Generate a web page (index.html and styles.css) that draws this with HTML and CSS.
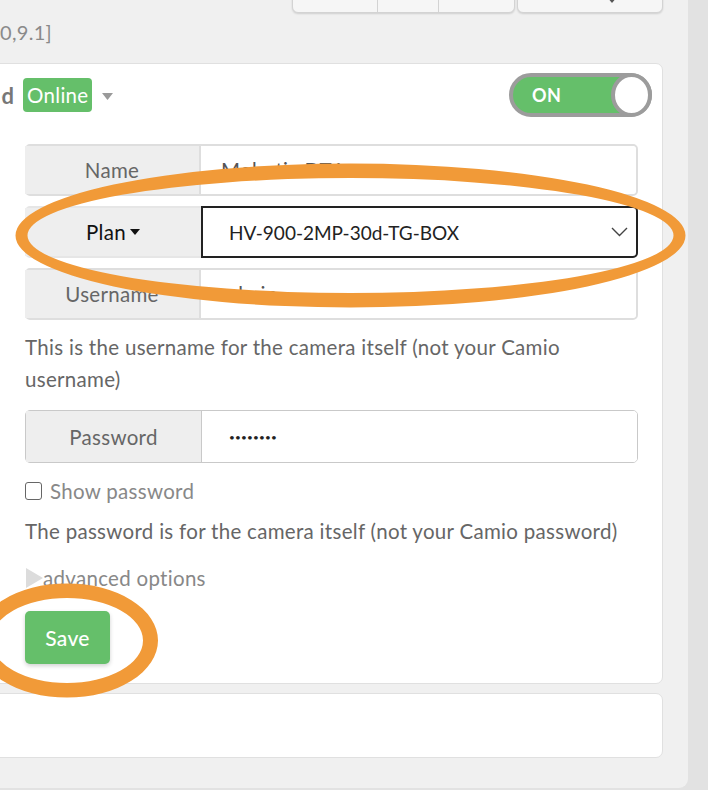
FILE: index.html
```html
<!DOCTYPE html>
<html lang="en">
<head>
<meta charset="utf-8">
<title>Camera settings</title>
<link rel="stylesheet" href="styles.css">
</head>
<body>
<div class="panel">
  <div class="toolbar">
    <div class="btn-group">
      <span class="seg seg-1"></span>
      <span class="seg seg-2"></span>
      <span class="seg seg-3"></span>
    </div>
    <div class="btn-menu">
      <svg class="menu-caret" width="10" height="6" viewBox="0 0 10 6"><path d="M0 0h10L5 6z" fill="#555"/></svg>
    </div>
  </div>

  <div class="version"><span>[1.0,9.1]</span></div>

  <div class="card card-main">
    <div class="card-head">
      <div class="title-clip"><span class="title">Mobotix DT1 Hardwired</span></div>
      <span class="badge">Online</span>
      <svg class="status-caret" width="11" height="7" viewBox="0 0 11 7"><path d="M0 0h11L5.5 7z" fill="#9a9a9a"/></svg>
      <div class="toggle">
        <span class="toggle-label">ON</span>
        <span class="toggle-knob"></span>
      </div>
    </div>

    <div class="form">
      <div class="group">
        <div class="group-label">Name</div>
        <div class="group-field"><span class="value">Mobotix DT1</span></div>
      </div>
      <div class="group group-plan">
        <div class="group-label label-plan">Plan <svg width="10" height="6" viewBox="0 0 10 6"><path d="M0 0h10L5 6z" fill="#111"/></svg></div>
        <div class="group-field field-select">
          <span class="select-text">HV-900-2MP-30d-TG-BOX</span>
          <svg class="chevron" width="17" height="10" viewBox="0 0 17 10"><path d="M1 1l7.5 7.5L16 1" fill="none" stroke="#444" stroke-width="1.4"/></svg>
        </div>
      </div>
      <div class="group">
        <div class="group-label">Username</div>
        <div class="group-field"><span class="value">admin</span></div>
      </div>

      <p class="help help-user">This is the username for the camera itself (not your Camio username)</p>

      <div class="group group-pass">
        <div class="group-label">Password</div>
        <div class="group-field"><span class="dots">••••••••</span></div>
      </div>

      <label class="check"><span class="box"></span>Show password</label>

      <p class="help help-pass">The password is for the camera itself (not your Camio password)</p>

      <div class="advanced"><svg class="adv-tri" width="17" height="20" viewBox="0 0 17 20"><path d="M0 0L17 10L0 20z" fill="#dcdcdc"/></svg><span>advanced options</span></div>

      <button class="save" type="button">Save</button>
    </div>
  </div>

  <div class="card card-empty"></div>
</div>

<svg class="marks" width="708" height="790" viewBox="0 0 708 790">
  <path fill="#f19a38" fill-rule="evenodd" d="M15.5 235.5a335 72 0 1 0 670 0a335 72 0 1 0 -670 0Z M27.5 235.5a323 57.5 0 1 0 646 0a323 57.5 0 1 0 -646 0Z"/>
  <path fill="#f19a38" fill-rule="evenodd" d="M-24 640.5a91 57 0 1 0 182 0a91 57 0 1 0 -182 0Z M-9 640.5a76 42.5 0 1 0 152 0a76 42.5 0 1 0 -152 0Z"/>
</svg>
</body>
</html>
```

FILE: styles.css
```css
* { box-sizing: border-box; }

html, body {
  margin: 0;
  padding: 0;
  width: 708px;
  height: 790px;
  overflow: hidden;
  background: #e2e2e2;
  font-family: Lato, "Liberation Sans", sans-serif;
  letter-spacing: 0.3px;
}

.panel {
  width: 688px;
  height: 788px;
  background: #f0f0f0;
  border-bottom-right-radius: 9px;
  padding-right: 25px;
  overflow: hidden;
}

/* top toolbar (mostly scrolled out of view) */
.toolbar {
  display: flex;
  justify-content: flex-end;
  gap: 2px;
  margin-top: -22px;
  height: 35px;
}
.btn-group {
  display: flex;
  width: 223px;
  height: 35px;
  border: 1px solid #d3d3d3;
  border-radius: 6px;
  background: #f6f6f6;
  box-shadow: 0 1px 2px rgba(0,0,0,0.14);
  overflow: hidden;
}
.seg { height: 100%; }
.seg-1 { width: 85px; border-right: 1px solid #d3d3d3; }
.seg-2 { width: 61px; border-right: 1px solid #d3d3d3; }
.seg-3 { flex: 1; }
.btn-menu {
  width: 146px;
  height: 35px;
  border: 1px solid #d3d3d3;
  border-radius: 6px;
  background: #f6f6f6;
  box-shadow: 0 1px 2px rgba(0,0,0,0.14);
  display: flex;
  justify-content: flex-end;
  align-items: flex-start;
  padding: 18px 45px 0 0;
}

.version {
  height: 50px;
  width: 52px;
  display: flex;
  justify-content: flex-end;
  overflow: hidden;
  line-height: 38px;
  font-size: 20px;
  color: #8a8a8a;
  white-space: nowrap;
}

/* cards */
.card {
  background: #fff;
  border: 1px solid #e0e0e0;
  border-radius: 7px;
  margin-left: -16px;
}
.card-main {
  padding: 9px 10px 19px 16px;
}
.card-empty {
  margin-top: 9px;
  height: 65px;
}

.card-head {
  display: flex;
  align-items: center;
  height: 44px;
}
.title-clip {
  width: 14px;
  display: flex;
  justify-content: flex-end;
  overflow: hidden;
  white-space: nowrap;
}
.title {
  font-weight: 700;
  font-size: 22px;
  color: #777;
  letter-spacing: 0;
  padding-right: 1px;
}
.badge {
  margin-left: 8px;
  height: 34px;
  line-height: 34px;
  padding: 0 4px;
  border-radius: 4px;
  background: #65bf6a;
  color: #fff;
  font-size: 20.5px;
}
.status-caret { margin-left: 10px; margin-top: 2px; }

.toggle {
  margin-left: auto;
  width: 143px;
  height: 44px;
  border: 4px solid #9c9c9c;
  border-radius: 22px;
  background: #65bf6a;
  display: flex;
  align-items: center;
  justify-content: space-between;
}
.toggle-label {
  padding-left: 19px;
  color: #fff;
  font-weight: 700;
  font-size: 18px;
  letter-spacing: 0.5px;
}
.toggle-knob {
  width: 41px;
  height: 44px;
  margin: -4px -4px -4px 0;
  border: 4px solid #9c9c9c;
  border-radius: 50%;
  background: #fff;
}

/* form */
.form {
  margin-top: 27px;
  padding: 0 14px 0 24px;
}
.group {
  display: flex;
  height: 52px;
  margin-bottom: 10px;
  border: 2px solid #dedede;
  border-radius: 5px;
  font-size: 20.5px;
}
.group-label {
  width: 176px;
  flex: none;
  background: #eee;
  color: #666;
  display: flex;
  align-items: center;
  justify-content: center;
  border-right: 2px solid #dedede;
  margin-left: -2px;
}
.group-field {
  flex: 1;
  display: flex;
  align-items: center;
  padding-left: 20px;
  background: #fff;
  border-radius: 0 4px 4px 0;
}
.value { color: #555; }

.group-plan {
  border-color: #e6e6e6;
}
.label-plan {
  color: #111;
  gap: 4px;
  border-right: none;
}
.field-select {
  margin: -2px -2px -2px 0;
  border: 2px solid #222;
  border-radius: 0 5px 5px 0;
  padding: 0 8px 0 26px;
  justify-content: space-between;
  color: #222;
}
.select-text {
  font-size: 19px;
  letter-spacing: 0;
}

.help {
  margin: 0;
  font-size: 20.5px;
  line-height: 32px;
  color: #666;
}
.help-user { margin-top: 11px; padding-right: 60px; }

.group-pass {
  margin-top: 15px;
  margin-bottom: 0;
  height: 53px;
  border: 1px solid #c9c9c9;
}
.group-pass .group-label { margin-left: 0; border-right: 1px solid #c9c9c9; }
.group-pass .group-field { padding-left: 27px; }
.dots { font-size: 10px; letter-spacing: 0.2px; color: #222; }

.check {
  display: flex;
  align-items: center;
  margin-top: 12px;
  height: 32px;
  font-size: 20.5px;
  color: #888;
}
.box {
  width: 17px;
  height: 18px;
  border: 1.5px solid #666;
  border-radius: 3px;
  margin-right: 8px;
  background: #fff;
}
.help-pass { margin-top: 8px; }

.advanced {
  margin-top: 15px;
  height: 32px;
  display: flex;
  align-items: center;
  font-size: 20.5px;
  color: #888;
}
.adv-tri { margin-left: 1px; flex: none; }

.save {
  display: block;
  margin-top: 17px;
  width: 85px;
  height: 53px;
  border: none;
  border-radius: 5px;
  background: #65bf6a;
  color: #fff;
  font-family: inherit;
  font-size: 21px;
  font-weight: 500;
  letter-spacing: 0.3px;
  box-shadow: 0 2px 4px rgba(0,0,0,0.18);
  padding: 0;
}

.marks {
  position: absolute;
  top: 0;
  left: 0;
  pointer-events: none;
}
```
